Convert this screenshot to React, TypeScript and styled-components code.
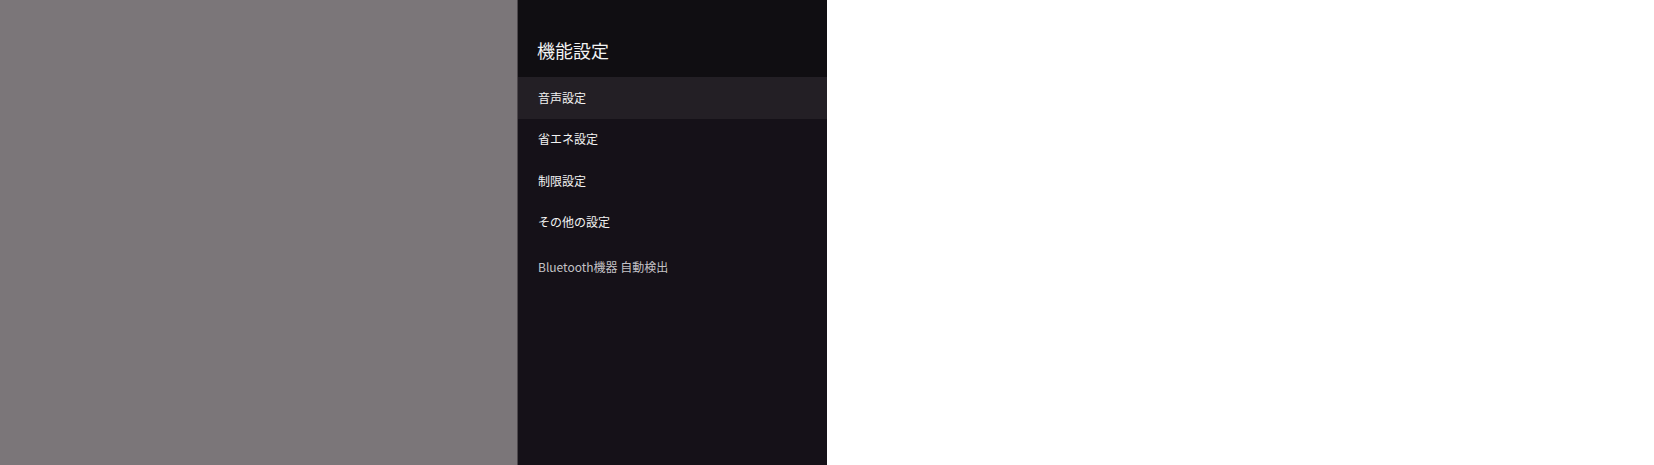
import React from "react";
import styled, { createGlobalStyle } from "styled-components";

const GlobalStyle = createGlobalStyle`
  html, body {
    margin: 0;
    padding: 0;
    background: #ffffff;
    height: 465px;
    overflow: hidden;
  }
  #root {
    height: 465px;
  }
`;

const Screen = styled.div`
  display: flex;
  height: 465px;
  width: 1654px;
  font-family: "Noto Sans CJK JP", "Noto Sans", sans-serif;
`;

const Scrim = styled.div`
  width: 517px;
  flex: none;
  background: #7b7679;
`;

const Drawer = styled.nav`
  width: 310px;
  flex: none;
  display: flex;
  flex-direction: column;
  background: #151118;
  border-left: 1px solid #4d484c;
  box-sizing: border-box;
`;

const Header = styled.header`
  height: 77px;
  flex: none;
  box-sizing: border-box;
  background: #100e12;
  display: flex;
  align-items: flex-end;
  padding: 0 0 15px 19px;
`;

const Title = styled.h1`
  margin: 0;
  font-size: 18px;
  font-weight: 400;
  line-height: 24px;
  color: #f2f2f2;
`;

const Menu = styled.ul`
  list-style: none;
  margin: 0;
  padding: 0;
  display: flex;
  flex-direction: column;
`;

const Item = styled.li<{ $active?: boolean; $tall?: boolean; $muted?: boolean }>`
  height: ${(p) => (p.$tall ? "48px" : "41.5px")};
  display: flex;
  align-items: center;
  padding-left: 20px;
  font-size: 12px;
  line-height: 16px;
  color: ${(p) => (p.$muted ? "#c4c2c6" : "#f2f2f2")};
  background: ${(p) => (p.$active ? "#231f25" : "transparent")};
`;

const Blank = styled.div`
  flex: 1;
  background: #ffffff;
`;

export default function App() {
  return (
    <>
      <GlobalStyle />
      <Screen>
        <Scrim />
        <Drawer>
          <Header>
            <Title>機能設定</Title>
          </Header>
          <Menu>
            <Item $active>音声設定</Item>
            <Item>省エネ設定</Item>
            <Item>制限設定</Item>
            <Item>その他の設定</Item>
            <Item $tall $muted>Bluetooth機器 自動検出</Item>
          </Menu>
        </Drawer>
        <Blank />
      </Screen>
    </>
  );
}
